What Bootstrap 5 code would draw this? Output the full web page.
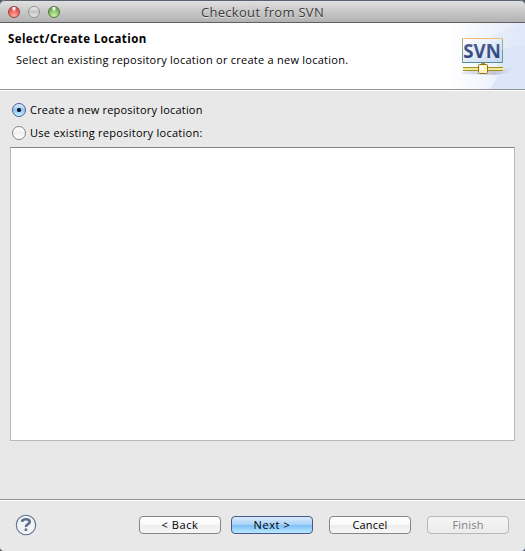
<!DOCTYPE html>
<html lang="en">
<head>
<meta charset="utf-8">
<meta name="viewport" content="width=device-width, initial-scale=1">
<title>Checkout from SVN</title>
<link href="https://cdn.jsdelivr.net/npm/bootstrap@5.3.0/dist/css/bootstrap.min.css" rel="stylesheet">
<style>
body{background:#4b5763;font-family:"Open Sans","Noto Sans",sans-serif;font-size:11px;line-height:14px;color:#000;letter-spacing:.2px;overflow:hidden}
.dialog-window{height:551px;background:#e8e8e8;border-radius:5px 5px 4px 4px}
.title-bar{height:23px;background:linear-gradient(#e0e0e0,#cfcfcf 35%,#b2b2b2);border-top:1px solid #56616c;border-bottom:1px solid #606060;border-radius:5px 5px 0 0;padding-left:8px}
.title-text{font-size:13px;line-height:20px;color:#3c3c3c;letter-spacing:.3px;text-shadow:0 1px 0 #e4e4e4;padding-top:1px}
.light{width:12px;height:12px;border-radius:50%;border:1px solid #777;margin-top:1px}
.light-red{border-color:#934543;background:radial-gradient(ellipse at 50% 5%,#fff 0 10%,transparent 35%),radial-gradient(circle at 50% 90%,#ffb0a5,#ee6660 50%,#c7403d)}
.light-gray{border-color:#909090;background:linear-gradient(#f2f2f2,#c4c4c4 45%,#e6e6e6)}
.light-green{border-color:#4c7a3e;background:radial-gradient(ellipse at 50% 5%,#fff 0 10%,transparent 35%),radial-gradient(circle at 50% 90%,#d2f8a9,#86bd68 55%,#578d48)}
.banner{height:67px;background:#fff;border-bottom:1px solid #969696}
.banner-copy{padding:9px 0 0 8px}
.banner-title{font-weight:700;font-size:11.5px;letter-spacing:.4px}
.banner-note{padding:7px 0 0 8px;letter-spacing:.25px}
.content-area{border-top:1px solid #fff;padding:12px 10px 0;height:409px}
.choice{height:23px;padding-left:2px;gap:4px}
.existing-choice{letter-spacing:.27px}
.radio-dot{width:14px;height:14px;border-radius:50%;border:1px solid #858585;background:linear-gradient(#fff,#f1f1f1 50%,#fff)}
.radio-dot.chosen{border-color:#4a5a91;background:radial-gradient(circle,#111b30 0 1.7px,transparent 2.5px),linear-gradient(#e2effc,#92c4f1 50%,#c8f0ff)}
.location-list{height:294px;background:#fff;border:1px solid #b9b9b9;border-top-color:#858585;margin-top:-2px}
.action-bar{height:52px;border-top:1px solid #969696;box-shadow:inset 0 1px #fff;padding:0 16px 2px 15px}
.action-buttons{gap:16px}
.btn.mac{width:82px;height:18px;border:1px solid #858585;border-radius:4px;padding:0;font-size:11px;line-height:16px;color:#000;background:linear-gradient(#fff,#f9f9f9 48%,#ededed 50%,#f7f7f7);letter-spacing:.2px}
.btn.mac.step{letter-spacing:.6px}
.btn.mac.primary{border-color:#495790;background:linear-gradient(#d8eafb,#a9d2f7 48%,#7bbdf5 50%,#b9eaff)}
.btn.mac:disabled{border-color:#b8b8b8;color:#808080;background:linear-gradient(#f4f4f4,#ececec);opacity:1}
</style>
<script src="https://cdn.jsdelivr.net/npm/bootstrap@5.3.0/dist/js/bootstrap.bundle.min.js"></script>
</head>
<body>
<main class="dialog-window d-flex flex-column overflow-hidden">
<header class="title-bar d-flex align-items-center">
<div class="d-flex gap-2"><span class="light light-red"></span><span class="light light-gray"></span><span class="light light-green"></span></div>
<div class="title-text flex-grow-1 text-center">Checkout from SVN</div><div style="width:60px"></div>
</header>
<section class="banner d-flex justify-content-between">
<div class="banner-copy"><div class="banner-title">Select/Create Location</div><div class="banner-note">Select an existing repository location or create a new location.</div></div>
<svg width="75" height="66" viewBox="450 23 75 66" aria-label="SVN">
<defs><linearGradient id="sky"><stop stop-color="#fff"/><stop offset="1" stop-color="#e2eafa"/></linearGradient><linearGradient id="frame" x2="0" y2="1"><stop stop-color="#eebb78"/><stop offset="1" stop-color="#568b8f"/></linearGradient><linearGradient id="panel" x2="1" y2="1"><stop stop-color="#fff"/><stop offset="1" stop-color="#c4d9f0"/></linearGradient><linearGradient id="ink" x2="0" y2="1"><stop stop-color="#53659a"/><stop offset="1" stop-color="#263b75"/></linearGradient><linearGradient id="shade"><stop stop-color="#c4c3dc" stop-opacity=".3"/><stop offset=".6" stop-color="#c4c3d6"/><stop offset="1" stop-color="#dce4f5" stop-opacity="0"/></linearGradient></defs>
<path d="M450 23h75v66h-75z" fill="url(#sky)"/><path d="M486 42q18-15 39-18v65h-35q17-25-4-47" fill="#e0e8f9" opacity=".6"/><path d="M500 52q10-6 25-7v44h-36q15-14 11-37" fill="#d5e1f7" opacity=".55"/>
<path d="M460 74l8-4h35l17-8-12 11-13 2z" fill="url(#shade)"/>
<path d="M462.500 38.500h40v24h-40z" fill="url(#panel)"/><path d="M462 38.500h41" stroke="#efbd7c"/><path d="M462.500 39v24M502.500 39v24" stroke="#a9a886"/><path d="M462 62.500h41" stroke="#568b8f"/><path d="M462.500 50v13M502.500 50v13" stroke="#71999a"/>
<text x="463.300" y="58.200" font-family="Open Sans" font-size="19" font-weight="700" fill="url(#ink)" textLength="37.500" lengthAdjust="spacingAndGlyphs" letter-spacing="0">SVN</text>
<path d="M463 67.500h40M463 70.500h40" stroke="#a09325"/><path d="M463 69h40" stroke="#f5e99a" stroke-width="2"/><path d="M481 63h4v2h-4z" fill="#a09348"/><rect x="478.500" y="64.500" width="9" height="9" rx="1" fill="#fff0bd" stroke="#8a7318"/><path d="M480 66h4v4h-4z" fill="#fffdf0"/>
</svg>
</section>
<section class="content-area">
<div class="choice d-flex align-items-start"><span class="radio-dot chosen"></span><span>Create a new repository location</span></div>
<div class="choice existing-choice d-flex align-items-start"><span class="radio-dot"></span><span>Use existing repository location:</span></div>
<div class="location-list"></div>
</section>
<footer class="action-bar d-flex align-items-center">
<svg width="22" height="22" viewBox="0 0 22 22" aria-label="Help"><circle cx="11" cy="11" r="9.700" fill="#f1f3f5" stroke="#5a708e" stroke-width="1.100"/><path d="M7 7.800q.3-2.500 4-2.500c4.500 0 4.500 3.400 2 4.800-1.600.9-2.100 1.200-2.100 2.900M10.900 14.600v2.400" fill="none" stroke="#5a708e" stroke-width="2.600"/></svg>
<div class="action-buttons ms-auto d-flex"><div class="d-flex" style="gap:10px"><button class="btn mac step">&lt; Back</button><button class="btn mac step primary">Next &gt;</button></div><button class="btn mac">Cancel</button><button class="btn mac" disabled>Finish</button></div>
</footer>
</main>
</body>
</html>
